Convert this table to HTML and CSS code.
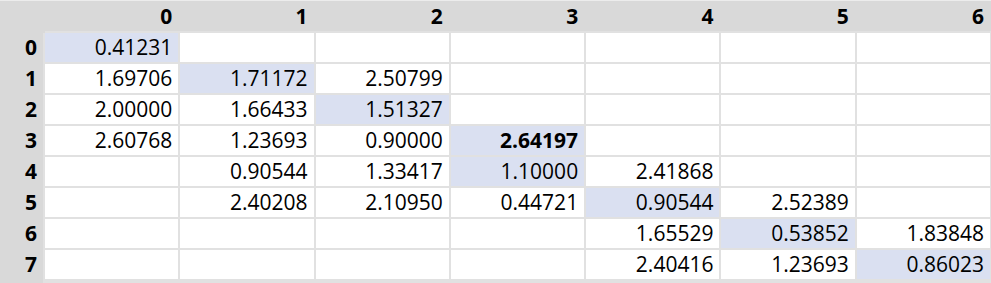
FILE: index.html
```html
<!DOCTYPE html>
<html>
<head>
<meta charset="utf-8">
<link rel="stylesheet" href="styles.css">
</head>
<body>
<div class="sheet">
  <div class="corner"></div>
  <div class="colhead">0</div><div class="colhead">1</div><div class="colhead">2</div><div class="colhead">3</div><div class="colhead">4</div><div class="colhead">5</div><div class="colhead">6</div>

  <div class="rowhead">0</div>
  <div class="cell hl">0.41231</div><div class="cell"></div><div class="cell"></div><div class="cell"></div><div class="cell"></div><div class="cell"></div><div class="cell"></div>

  <div class="rowhead">1</div>
  <div class="cell">1.69706</div><div class="cell hl">1.71172</div><div class="cell">2.50799</div><div class="cell"></div><div class="cell"></div><div class="cell"></div><div class="cell"></div>

  <div class="rowhead">2</div>
  <div class="cell">2.00000</div><div class="cell">1.66433</div><div class="cell hl">1.51327</div><div class="cell"></div><div class="cell"></div><div class="cell"></div><div class="cell"></div>

  <div class="rowhead">3</div>
  <div class="cell">2.60768</div><div class="cell">1.23693</div><div class="cell">0.90000</div><div class="cell hl bold">2.64197</div><div class="cell"></div><div class="cell"></div><div class="cell"></div>

  <div class="rowhead">4</div>
  <div class="cell"></div><div class="cell">0.90544</div><div class="cell">1.33417</div><div class="cell hl">1.10000</div><div class="cell">2.41868</div><div class="cell"></div><div class="cell"></div>

  <div class="rowhead">5</div>
  <div class="cell"></div><div class="cell">2.40208</div><div class="cell">2.10950</div><div class="cell">0.44721</div><div class="cell hl">0.90544</div><div class="cell">2.52389</div><div class="cell"></div>

  <div class="rowhead">6</div>
  <div class="cell"></div><div class="cell"></div><div class="cell"></div><div class="cell"></div><div class="cell">1.65529</div><div class="cell hl">0.53852</div><div class="cell">1.83848</div>

  <div class="rowhead last">7</div>
  <div class="cell"></div><div class="cell"></div><div class="cell"></div><div class="cell"></div><div class="cell">2.40416</div><div class="cell">1.23693</div><div class="cell hl">0.86023</div>
</div>
</body>
</html>
```

FILE: styles.css
```css
html, body {
  margin: 0;
  padding: 0;
  background: #e1e1e1;
}

.sheet {
  width: 991px;
  height: 283px;
  box-sizing: border-box;
  display: grid;
  grid-template-columns: 43px repeat(7, 1fr);
  grid-template-rows: 30px repeat(8, 29px);
  column-gap: 2px;
  row-gap: 2px;
  padding: 0 1px 4px 0;
  border-top: 1px solid #ececec;
  background: #e1e1e1;
  font-family: "Open Sans", "Noto Sans", sans-serif;
  font-size: 21px;
  color: #000;
}

.corner,
.colhead,
.rowhead {
  background: #d9d9d9;
  font-weight: 700;
  text-align: right;
  padding-right: 6px;
}

.corner {
  box-shadow: 2px 0 0 #d9d9d9, 0 2px 0 #d9d9d9, 2px 2px 0 #d9d9d9;
}

.colhead {
  line-height: 30px;
  box-shadow: 2px 0 0 #d9d9d9;
}

.colhead:nth-child(8) {
  box-shadow: 1px 0 0 #d9d9d9;
}

.rowhead {
  line-height: 29px;
  box-shadow: 0 2px 0 #d9d9d9;
}

.rowhead.last {
  box-shadow: 0 4px 0 #d9d9d9;
}

.cell {
  background: #ffffff;
  line-height: 29px;
  text-align: right;
  padding-right: 6px;
}

.cell.hl {
  background: #dae0f1;
}

.cell.bold {
  font-weight: 700;
}
```
